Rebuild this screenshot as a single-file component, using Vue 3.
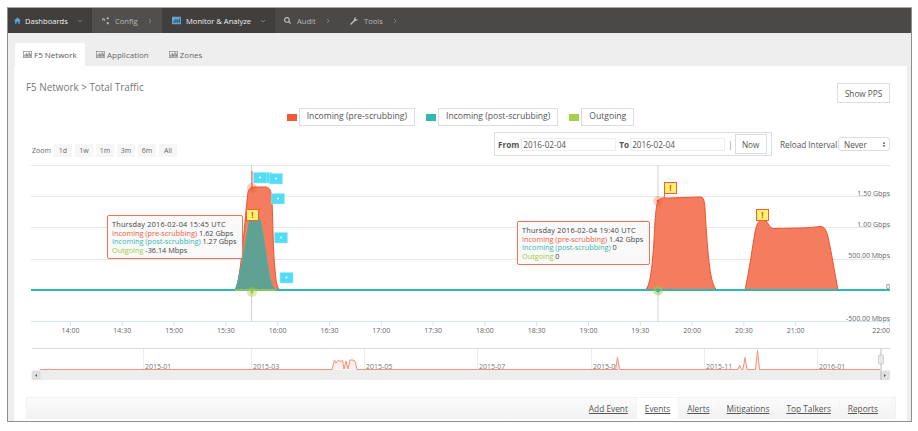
<template>
  <div class="page">
    <div class="frame">
      <nav class="topnav">
        <a v-for="item in navItems" :key="item.label" class="nav-item" :class="[item.cls, { open: item.open }]">
          <svg class="nav-icon" viewBox="0 0 12 12" :style="{ width: item.iconSize + 'px', height: item.iconSize + 'px' }">
            <path :d="item.icon" :fill="item.open ? '#5aa5dc' : '#bdbdbd'" />
          </svg>
          <span>{{ item.label }}</span>
          <svg class="nav-arrow" viewBox="0 0 6 6">
            <path :d="item.open ? 'M1 2l2 2 2-2' : 'M2 1l2 2-2 2'" fill="none" stroke="#8d8d8b" stroke-width="0.8" />
          </svg>
        </a>
      </nav>

      <div class="tabbar">
        <a v-for="(tab, i) in tabs" :key="tab" class="tab" :class="{ active: i === 0 }">
          <svg class="tab-icon" viewBox="0 0 10 8">
            <rect x="0.4" y="0.4" width="9.2" height="7.2" fill="none" stroke="#888" stroke-width="0.8" />
            <path d="M2 6.5V4M3.6 6.5V2.5M5.2 6.5V3.5M6.8 6.5V1.5M8.2 6.5V3" stroke="#666" stroke-width="1" />
          </svg>
          {{ tab }}
        </a>
      </div>

      <main class="panel">
        <div class="head-row">
          <h2 class="title">F5 Network &gt; Total Traffic</h2>
          <button class="btn pps">Show PPS</button>
        </div>

        <div class="legend">
          <template v-for="l in legend" :key="l.label">
            <i class="swatch" :style="{ background: l.color }"></i>
            <span class="legend-box">{{ l.label }}</span>
          </template>
        </div>

        <div class="controls">
          <div class="zoom">
            <span class="zoom-label">Zoom</span>
            <span v-for="z in zooms" :key="z" class="zoom-btn">{{ z }}</span>
          </div>
          <div class="range">
            <div class="range-box">
              <b>From</b>
              <input class="date" value="2016-02-04" readonly />
              <b class="to-label">To</b>
              <input class="date date-to" value="2016-02-04" readonly />
              <span class="sep">|</span>
              <button class="btn now">Now</button>
            </div>
            <span class="reload-label">Reload Interval</span>
            <div class="select">
              <span>Never</span>
              <svg viewBox="0 0 6 10" class="select-arrows"><path d="M3 1l2 3H1zM3 9L1 6h4z" fill="#555" /></svg>
            </div>
          </div>
        </div>

        <div class="chart">
          <svg class="chart-svg" viewBox="14 160 893 225" width="893" height="225">
            <!-- grid -->
            <line v-for="y in gridY" :key="y" x1="31" x2="890" :y1="y" :y2="y" stroke="#e8e8e8" stroke-width="1" />
            <text v-for="l in yLabels" :key="l.text" class="axis-text" x="890" :y="l.y" text-anchor="end">{{ l.text }}</text>

            <line x1="31" x2="890" y1="321.5" y2="321.5" stroke="#d6e2ee" stroke-width="1" />
            <g v-for="t in xTicks" :key="t.text">
              <line :x1="t.x" :x2="t.x" y1="322" y2="326" stroke="#d6e2ee" />
              <text class="axis-text" :x="t.text === '22:00' ? 890 : t.x" y="333" :text-anchor="t.text === '22:00' ? 'end' : 'middle'">{{ t.text }}</text>
            </g>

            <!-- crosshairs -->
            <line x1="251.5" x2="251.5" y1="165" y2="321" stroke="#cfcfcf" />
            <line x1="658" x2="658" y1="165" y2="321" stroke="#cfcfcf" />

            <!-- areas -->
            <path class="area" d="M235 290C241 282 245 215 248 192C250 186 254 187 258 187L266 187C270 188 271 190 272 200C273 225 273 250 275 270C276 282 277 288 280 290Z" />
            <path class="area-teal" d="M235 290C240 280 246 240 250 218C252 214 256 214 258 215C262 222 265 250 268 268C270 282 272 288 276 290Z" />
            <path class="area" d="M645 290C650 287 652 270 654 240C655 220 656 205 658 201C661 197 664 198 668 198L700 197C703 197 704 198 705 208C706 230 708 255 710 270C712 282 714 288 717 290Z" />
            <path class="area" d="M745 290C749 272 752 250 755 232C757 223 759 220 762 220L766 221C768 222 769 228 773 228.500L800 228C808 228 815 227 820 226.500C824 226 826 229 828 237C832 255 835 275 838 290Z" />

            <path d="M31 290H890" stroke="#2fb8b2" stroke-width="2" fill="none" />
            <path d="M235 290H276" stroke="#a9c94a" stroke-width="1.500" fill="none" />

            <!-- hover markers -->
            <circle cx="252" cy="188" r="5" fill="#f15a30" opacity="0.28" />
            <circle cx="252" cy="188" r="1.500" fill="#f15a30" />
            <circle cx="252" cy="292" r="5" fill="#a4c93e" opacity="0.4" />
            <circle cx="252" cy="292" r="1.500" fill="#a4c93e" />
            <circle cx="658" cy="201" r="5" fill="#f15a30" opacity="0.28" />
            <circle cx="658" cy="201" r="1.500" fill="#f15a30" />
            <circle cx="658" cy="290.500" r="5" fill="#a4c93e" opacity="0.5" />
            <circle cx="658" cy="290.500" r="2" fill="#2fb8b2" />

            <!-- flag poles -->
            <line x1="252" x2="252" y1="171" y2="190" stroke="#f15a30" />
            <line x1="665" x2="664" y1="192" y2="198" stroke="#f15a30" />

            <!-- cyan event flags -->
            <g v-for="f in cyanFlags" :key="f.x">
              <rect :x="f.x" :y="f.y" width="13" height="10.500" fill="#52dcf8" stroke="#a8eafa" stroke-width="0.5" />
              <circle :cx="f.x + 6.500" :cy="f.y + 5" r="1" fill="#fff" />
            </g>

            <!-- alert flags -->
            <g v-for="f in alertFlags" :key="f.x">
              <rect :x="f.x" :y="f.y" width="12" height="11" fill="#fdf06a" stroke="#f1603c" stroke-width="1" />
              <text class="flag-text" :x="f.x + 6" :y="f.y + 8.500" text-anchor="middle">!</text>
            </g>

            <!-- navigator -->
            <line x1="32" x2="890" y1="348.500" y2="348.500" stroke="#d5d8dc" />
            <g v-for="n in navMonths" :key="n.text">
              <line :x1="n.x" :x2="n.x" y1="349" y2="370" stroke="#ececec" />
              <text class="nav-text" :x="n.x + 1.500" y="369">{{ n.text }}</text>
            </g>
            <path d="M40 369.500H48L49 369L50 369.500H332L334.500 360L336 363L338 360.500L341 361.500L342.500 360L344 369L346 361L348 369L350 360L353 360L355 361L357 369.500H617L618 370H615.500L617.500 357L619.500 369.500H738L739.500 365L741.500 369.500H743L745 357.500L747 369.500H755.500L757.500 350.500L759.500 369.500H880" fill="#fdf0ec" stroke="#f6917a" stroke-width="1" />
            <rect x="32" y="370" width="858" height="10" fill="#eeeded" />
            <rect x="32" y="372" width="8" height="7" fill="#e2e2e2" stroke="#ccc" stroke-width="0.5" />
            <path d="M37 374v3l-2-1.500z" fill="#555" />
            <rect x="881" y="372" width="8" height="7" fill="#e2e2e2" stroke="#ccc" stroke-width="0.5" />
            <path d="M884 374v3l2-1.500z" fill="#555" />
            <line x1="881" x2="881" y1="349" y2="380" stroke="#b5bcc4" />
            <rect x="878.500" y="355" width="5" height="9" rx="1" fill="#e8e8e8" stroke="#bbb" stroke-width="0.6" />
          </svg>

          <div class="tip tip-one">
            <div class="tip-date">Thursday 2016-02-04 15:45 UTC</div>
            <div><span class="c-red">Incoming (pre-scrubbing)</span> 1.62 Gbps</div>
            <div><span class="c-teal">Incoming (post-scrubbing)</span> 1.27 Gbps</div>
            <div><span class="c-green">Outgoing</span> -36.14 Mbps</div>
          </div>
          <div class="tip tip-two">
            <div class="tip-date">Thursday 2016-02-04 19:40 UTC</div>
            <div><span class="c-red">Incoming (pre-scrubbing)</span> 1.42 Gbps</div>
            <div><span class="c-teal">Incoming (post-scrubbing)</span> 0</div>
            <div><span class="c-green">Outgoing</span> 0</div>
          </div>
        </div>

        <div class="bottom-tabs">
          <a class="bt bt-add">Add Event</a>
          <a class="bt bt-active">Events</a>
          <a class="bt">Alerts</a>
          <a class="bt">Mitigations</a>
          <a class="bt">Top Talkers</a>
          <a class="bt">Reports</a>
        </div>
      </main>
    </div>
  </div>
</template>

<script setup>
const navItems = [
  { label: 'Dashboards', cls: 'n-dash', open: true, iconSize: 7, icon: 'M6 1L12 6.500H10V11.500H7.500V8H4.500V11.500H2V6.500H0Z' },
  { label: 'Config', cls: 'n-config', open: false, iconSize: 9, icon: 'M3.500 3a2 2 0 1 0 .01 0ZM3.500 4.500a1 1 0 1 1-.01 0ZM9 1.500a1.500 1.500 0 1 0 .01 0ZM9 8a1.500 1.500 0 1 0 .01 0Z' },
  { label: 'Monitor & Analyze', cls: 'n-mon', open: true, iconSize: 9, icon: 'M0 1H12V11H0ZM2 9H3.500V6H2ZM4.500 9H6V4H4.500ZM7 9H8.500V5H7ZM9.500 9H10.500V3H9.500Z' },
  { label: 'Audit', cls: 'n-audit', open: false, iconSize: 7, icon: 'M5 0a5 5 0 1 1-.01 0ZM5 2a3 3 0 1 0 .01 0ZM7.500 8.500L9 7L12 10.500L10.500 12Z' },
  { label: 'Tools', cls: 'n-tools', open: false, iconSize: 8, icon: 'M0 10.500L6 4.500C5.500 2.500 7 .5 9.500 .5L8 2.500L9.500 4L11.500 2.500C11.500 5 9.500 6.500 7.500 6L1.500 12Z' },
]

const tabs = ['F5 Network', 'Application', 'Zones']

const legend = [
  { label: 'Incoming (pre-scrubbing)', color: '#f2583a' },
  { label: 'Incoming (post-scrubbing)', color: '#33b8b2' },
  { label: 'Outgoing', color: '#a5cf45' },
]

const zooms = ['1d', '1w', '1m', '3m', '6m', 'All']

const gridY = [165.5, 196.5, 227.5, 259.5, 290.5]

const yLabels = [
  { text: '1.50 Gbps', y: 195.5 },
  { text: '1.00 Gbps', y: 226.5 },
  { text: '500.00 Mbps', y: 258 },
  { text: '0', y: 289 },
  { text: '-500.00 Mbps', y: 320.5 },
]

const xTicks = ['14:00', '14:30', '15:00', '15:30', '16:00', '16:30', '17:00', '17:30', '18:00', '18:30', '19:00', '19:30', '20:00', '20:30', '21:00']
  .map((text, i) => ({ text, x: 70.5 + i * 51.8 }))
  .concat([{ text: '22:00', x: 889.5 }])

const navMonths = [
  { text: '2015-01', x: 143.5 },
  { text: '2015-03', x: 251.5 },
  { text: '2015-05', x: 364.5 },
  { text: '2015-07', x: 477.5 },
  { text: '2015-09', x: 591.5 },
  { text: '2015-11', x: 704.5 },
  { text: '2016-01', x: 817.5 },
]

const cyanFlags = [
  { x: 258.5, y: 172.5 },
  { x: 253.5, y: 172.5 },
  { x: 269.5, y: 173.5 },
  { x: 271.5, y: 193.5 },
  { x: 274.5, y: 232.5 },
  { x: 280, y: 272.5 },
]

const alertFlags = [
  { x: 246.5, y: 209.5 },
  { x: 664.5, y: 182.5 },
  { x: 756.5, y: 209.5 },
]
</script>

<style>
html, body {
  margin: 0;
  background: #fff;
}
</style>

<style scoped>
.page {
  width: 918px;
  height: 431px;
  overflow: hidden;
  padding: 7px 6px 0 7px;
  box-sizing: border-box;
  font-family: "Open Sans", "Liberation Sans", sans-serif;
  color: #555;
}

.frame {
  height: 415px;
  box-sizing: border-box;
  border: 1px solid #8f8f8f;
  border-top-color: #a9a9a9;
  background: #eeeeee;
  overflow: hidden;
}

.topnav {
  display: flex;
  height: 25px;
  background: #4a4947;
  font-size: 7.6px;
  color: #b9b9b7;
}

.nav-item {
  display: flex;
  align-items: center;
  box-sizing: border-box;
}

.nav-item.open {
  color: #f0f0f0;
  background: #403f3d;
}

.n-dash { width: 84px; padding-left: 6px; }
.n-config { width: 70px; padding-left: 9px; background: #504f4d; }
.n-mon { width: 113px; padding-left: 10px; }
.n-audit { width: 66px; padding-left: 9px; }
.n-tools { width: 60px; padding-left: 9px; }

.nav-icon { margin-right: 4px; flex: none; }
.n-config .nav-icon, .n-mon .nav-icon { margin-right: 5px; }
.n-audit .nav-icon, .n-tools .nav-icon { margin-right: 6px; }

.nav-arrow {
  width: 6px;
  height: 6px;
  margin-left: 9px;
}

.tabbar {
  display: flex;
  height: 33px;
  align-items: flex-end;
  padding-left: 7px;
  font-size: 8px;
  color: #666;
}

.tab {
  display: flex;
  align-items: center;
  height: 23px;
  padding: 0 9px 0 11px;
  gap: 2px;
  box-sizing: border-box;
  white-space: nowrap;
}

.tab.active {
  background: #fff;
  width: 70px;
  padding-left: 8px;
  padding-right: 0;
  color: #555;
}

.tab-icon { width: 9px; height: 7px; flex: none; }

.panel {
  margin: 0 4px 0 6px;
  height: 355px;
  background: #fff;
  overflow: hidden;
}

.head-row {
  display: flex;
  justify-content: space-between;
  align-items: flex-start;
  padding: 17px 17px 0 12px;
}

.title {
  margin: 0;
  font-size: 9.9px;
  font-weight: 400;
  line-height: 9px;
  color: #777;
}

.btn {
  font-family: inherit;
  background: #fff;
  border: 1px solid #ddd;
  color: #555;
  font-size: 8.2px;
  padding: 0;
}

.pps { width: 53px; height: 20px; }

.legend {
  display: flex;
  justify-content: center;
  align-items: center;
  margin-top: 5px;
  height: 18px;
  font-size: 8.6px;
  color: #555;
}

.swatch {
  width: 10px;
  height: 7px;
  margin: 0 2px 0 11px;
}

.swatch:first-child { margin-left: 0; }

.legend-box {
  height: 18px;
  line-height: 14px;
  padding: 0 7px;
  border: 1px solid #ddd;
  box-sizing: border-box;
}

.controls {
  display: flex;
  justify-content: space-between;
  align-items: flex-end;
  height: 24px;
  margin-top: 6px;
  padding: 0 17px 0 18px;
}

.zoom {
  display: flex;
  align-items: center;
  gap: 3px;
  font-size: 7px;
  color: #666;
  margin-bottom: -1px;
}

.zoom-label { margin-right: 1px; width: 18px; }

.zoom-btn {
  width: 18px;
  height: 13px;
  line-height: 13px;
  text-align: center;
  background: #f6f6f6;
}

.range {
  display: flex;
  align-items: center;
  font-size: 8.2px;
}

.range-box {
  display: flex;
  align-items: center;
  width: 278px;
  height: 24px;
  box-sizing: border-box;
  border: 1px solid #ddd;
  padding: 0 4px 0 3px;
  gap: 2px;
}

.range-box b { color: #555; font-weight: 700; }

.to-label { margin-left: 1px; }

.date {
  flex: none;
  width: 95px;
  height: 13px;
  box-sizing: border-box;
  border: 1px solid #eee;
  padding: 0 0 0 1px;
  font-family: inherit;
  font-size: 8.2px;
  color: #555;
  outline: none;
}

.date-to { margin-left: -1px; }

.sep { margin-left: 1px; color: #888; }

.now {
  flex: none;
  width: 32px;
  height: 20px;
}

.reload-label { margin-left: 8px; width: 58px; white-space: nowrap; }

.select {
  display: flex;
  justify-content: space-between;
  align-items: center;
  width: 52px;
  height: 14px;
  box-sizing: border-box;
  border: 1px solid #ddd;
  border-radius: 3px;
  padding: 0 3px 0 5px;
}

.select-arrows { width: 4px; height: 7px; }

.chart {
  position: relative;
  height: 225px;
  margin-top: 4px;
}

.chart-svg { display: block; }

.axis-text {
  font-size: 7px;
  fill: #666;
}

.nav-text {
  font-size: 7px;
  fill: #777;
}

.flag-text {
  font-size: 8px;
  font-weight: 700;
  fill: #e8502c;
}

.area {
  fill: #f47d5f;
  stroke: #f0522c;
  stroke-width: 1;
}

.area-teal {
  fill: #5fa294;
  stroke: #39b3ab;
  stroke-width: 1;
}

.tip {
  position: absolute;
  box-sizing: border-box;
  padding: 4px 0 0 4px;
  background: rgba(248, 248, 248, 0.92);
  border: 1px solid #f1745a;
  border-radius: 2px;
  font-size: 7.3px;
  line-height: 8.7px;
  color: #444;
  white-space: nowrap;
}

.tip-date { letter-spacing: 0.2px; }

.tip-one { left: 93px; top: 55px; width: 136px; height: 44px; }
.tip-two { left: 503px; top: 61px; width: 133px; height: 44px; }

.c-red { color: #f1603c; }
.c-teal { color: #33b8b2; }
.c-green { color: #a4c93e; }

.bottom-tabs {
  display: flex;
  justify-content: flex-end;
  align-items: stretch;
  height: 22px;
  margin: 12px 11px 0 12px;
  padding-right: 9px;
  background: linear-gradient(#fbfbfb, #f2f2f2);
  border: 1px solid #f2f2f2;
  border-bottom: none;
  font-size: 8.3px;
  box-sizing: border-box;
}

.bt {
  display: flex;
  align-items: center;
  color: #555;
  text-decoration: underline;
  padding: 0 8px;
  border-left: 1px solid #f4f4f4;
  white-space: nowrap;
}

.bt-add { border-left: none; }
.bt-active { background: #fff; }
</style>
